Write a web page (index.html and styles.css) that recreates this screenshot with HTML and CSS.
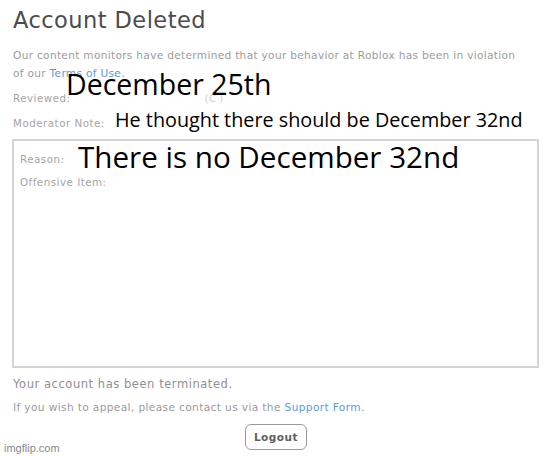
FILE: index.html
```html
<!DOCTYPE html>
<html>
<head>
<meta charset="utf-8">
<link rel="stylesheet" href="styles.css">
</head>
<body>
<div class="page">
  <h1 class="title">Account Deleted</h1>
  <p class="intro">Our content monitors have determined that your behavior at Roblox has been in violation of our <span class="link">Terms of Use.</span></p>
  <div class="row row-reviewed"><span class="label">Reviewed:</span><span class="faint">(C&thinsp;)</span></div>
  <div class="row row-note"><span class="label">Moderator Note:</span></div>
  <div class="box">
    <div class="row"><span class="label">Reason:</span></div>
    <div class="row"><span class="label">Offensive Item:</span></div>
  </div>
  <p class="terminated">Your account has been terminated.</p>
  <p class="appeal">If you wish to appeal, please contact us via the <span class="link">Support Form.</span></p>
  <div class="actions"><button class="logout">Logout</button></div>
  <div class="watermark">imgflip.com</div>

  <div class="caption cap-date">December 25th</div>
  <div class="caption cap-note">He thought there should be December 32nd</div>
  <div class="caption cap-reason">There is no December 32nd</div>
</div>
</body>
</html>
```
FILE: styles.css
```css
html, body {
  margin: 0;
  padding: 0;
  background: #ffffff;
}
.page {
  position: relative;
  width: 547px;
  height: 456px;
  padding: 0 8px 0 13px;
  box-sizing: border-box;
  font-family: "DejaVu Sans", "Open Sans", sans-serif;
  color: #9a9a9a;
  overflow: hidden;
}
.title {
  margin: 0;
  padding-top: 5px;
  font-size: 22.5px;
  line-height: 30px;
  font-weight: 400;
  color: #4a4c4f;
  letter-spacing: 0.45px;
}
.intro {
  margin: 11px 0 0;
  font-size: 10.6px;
  line-height: 18px;
  color: #9c9c9c;
  padding-right: 10px;
  letter-spacing: 0.3px;
}
.link { color: #5b9bd8; }
.row {
  font-size: 10.3px;
  line-height: 18px;
  display: flex;
  gap: 4px;
  letter-spacing: 0.5px;
}
.row-reviewed { margin-top: 7px; }
.row-note { margin-top: 7px; }
.faint { margin-left: 130px; color: #cfcfcf; }
.label { color: #a5a5a5; }
.box {
  margin: 7px 0 0 -1px;
  height: 229px;
  border: 2px solid #d4d4d4;
  box-sizing: border-box;
  padding: 9px 6px;
}
.box .row { margin-bottom: 5px; }
.terminated {
  margin: 7px 0 0;
  font-size: 11.5px;
  line-height: 18px;
  color: #909090;
  letter-spacing: 0.55px;
}
.appeal {
  margin: 5px 0 0;
  font-size: 10.6px;
  line-height: 18px;
  color: #9a9a9a;
  letter-spacing: 0.37px;
}
.actions {
  display: flex;
  justify-content: center;
  margin-top: 8px;
}
.logout {
  font-family: "DejaVu Sans", "Open Sans", sans-serif;
  font-size: 10.5px;
  font-weight: 700;
  color: #606060;
  background: #fff;
  border: 1px solid #9a9a9a;
  border-radius: 6px;
  width: 62px;
  height: 26px;
  padding: 0;
  letter-spacing: 0.5px;
}
.watermark {
  position: absolute;
  left: 4px;
  bottom: 2px;
  font-family: "Liberation Sans", sans-serif;
  font-size: 11px;
  color: #8a8a8a;
}
.caption {
  position: absolute;
  font-family: "Open Sans", "Noto Sans", sans-serif;
  color: #000;
  white-space: nowrap;
}
.cap-date {
  left: 66px;
  top: 64px;
  font-size: 28.5px;
  line-height: 40px;
}
.cap-note {
  left: 115px;
  top: 106px;
  font-size: 19.8px;
  line-height: 28px;
}
.cap-reason {
  left: 78px;
  top: 137px;
  font-size: 29.6px;
  line-height: 40px;
}
```
